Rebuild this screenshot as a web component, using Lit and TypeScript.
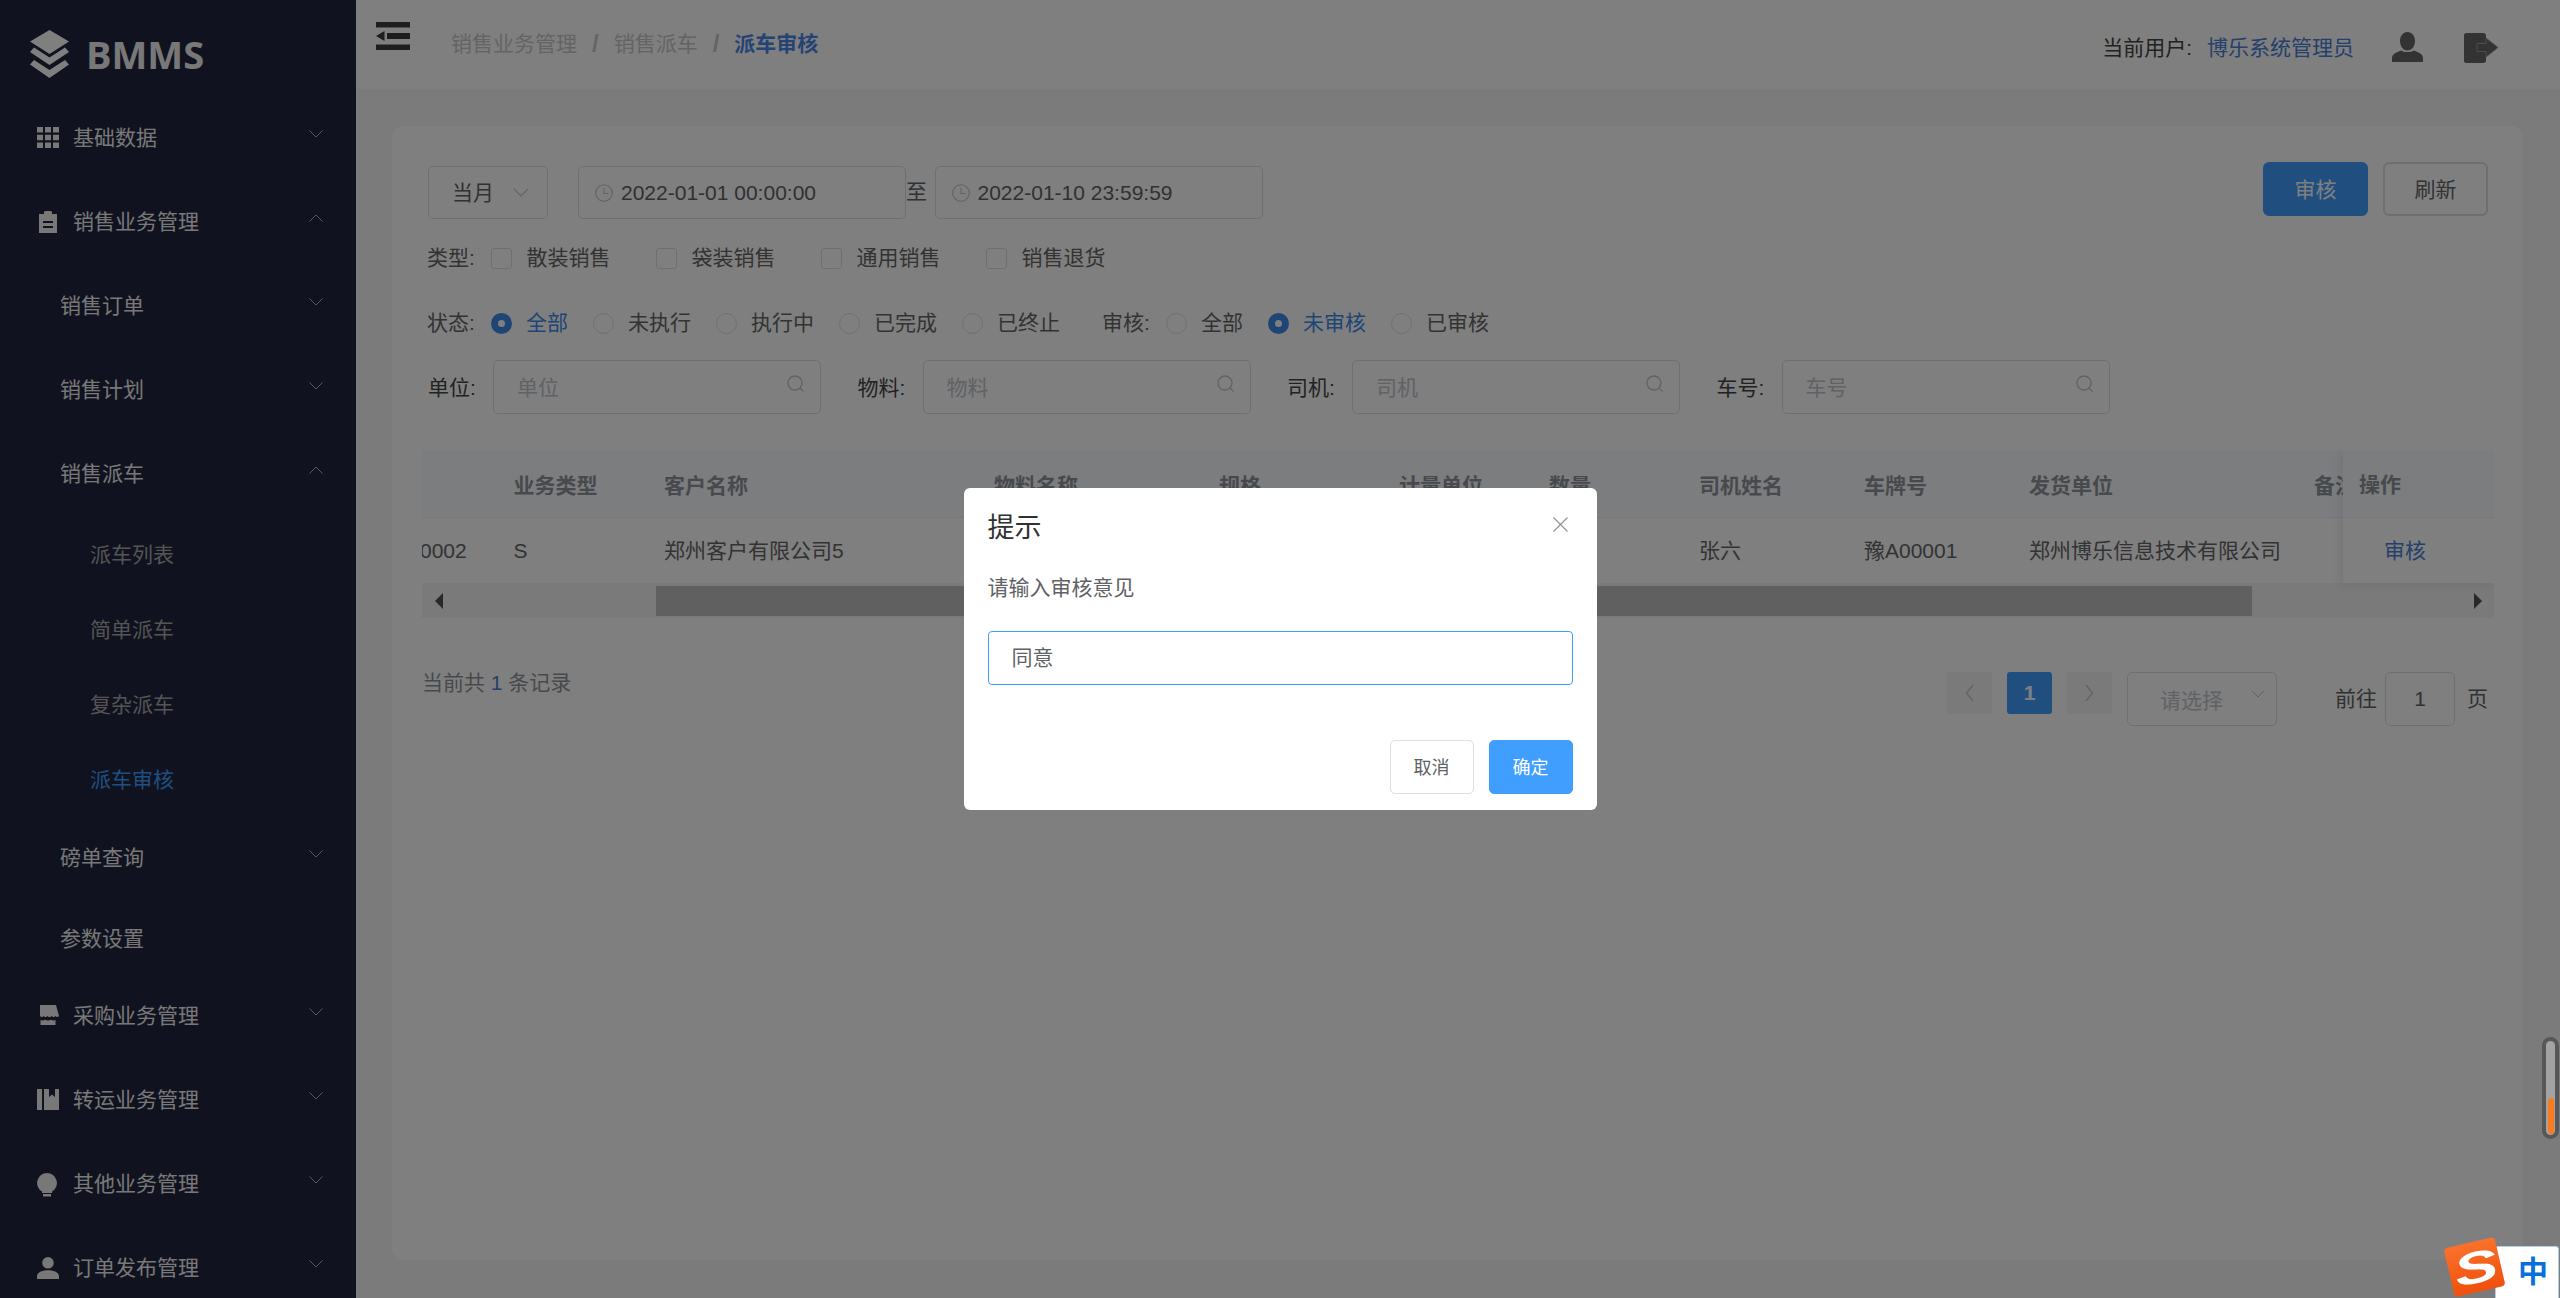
import { LitElement, html, svg, css } from "lit";
import { customElement } from "lit/decorators.js";

const icons: Record<string, any> = {
  grid: svg`<path d="M0 0h6v5.500H0zM8 0h6v5.500H8zM16 0h6v5.500h-6zM0 7.700h6v5.600H0zM8 7.700h6v5.600H8zM16 7.700h6v5.600h-6zM0 15.500h6V21H0zM8 15.500h6V21H8zM16 15.500h6V21h-6z"/>`,
  clip: svg`<path fill-rule="evenodd" d="M2 3h5V1.500C7 .6 7.600 0 8.500 0h5c.9 0 1.500.6 1.500 1.500V3h5v19H2zM6 10v2h10v-2zM6 15v2h10v-2z"/>`,
  shop: svg`<path d="M3 0h16l3 11c-1.500 1.500-3 1-3.500 0-1 1.500-3 1.500-3.700 0-1 1.500-3.400 1.500-4.300 0-1 1.500-3 1.500-3.800 0-.8 1.500-2.500 1.500-3.700 0zM3.500 15c1.500.8 3.500.5 4.500-.3 1.500 1 4.500 1 6 0 1 .8 3 1.100 4.500.3V20H3.500z"/>`,
  book: svg`<path d="M0 0h5v21H0zM7 0h5v8l3-2.500 3 2.500V0h4v21H7z"/>`,
  bulb: svg`<path d="M10 0a10 10 0 0 1 5 18.600V20H5v-1.400A10 10 0 0 1 10 0zM6 21h8v2.500H6z"/>`,
  user: svg`<path d="M11 0a5.800 5.800 0 1 1 0 11.600A5.800 5.800 0 0 1 11 0zM0 22v-3c0-3.600 5-5.800 11-5.800s11 2.200 11 5.800v3z"/>`,
};

type Item = { t: string; lv: number; icon?: string; ch?: "up" | "down"; on?: boolean };
const menu: Item[] = [
  { t: "基础数据", lv: 1, icon: "grid", ch: "down" },
  { t: "销售业务管理", lv: 1, icon: "clip", ch: "up" },
  { t: "销售订单", lv: 2, ch: "down" },
  { t: "销售计划", lv: 2, ch: "down" },
  { t: "销售派车", lv: 2, ch: "up" },
  { t: "派车列表", lv: 3 },
  { t: "简单派车", lv: 3 },
  { t: "复杂派车", lv: 3 },
  { t: "派车审核", lv: 3, on: true },
  { t: "磅单查询", lv: 2, ch: "down" },
  { t: "参数设置", lv: 2 },
  { t: "采购业务管理", lv: 1, icon: "shop", ch: "down" },
  { t: "转运业务管理", lv: 1, icon: "book", ch: "down" },
  { t: "其他业务管理", lv: 1, icon: "bulb", ch: "down" },
  { t: "订单发布管理", lv: 1, icon: "user", ch: "down" },
];

const heads = ["", "业务类型", "客户名称", "物料名称", "规格", "计量单位", "数量", "司机姓名", "车牌号", "发货单位", "备注"];
const cells = ["0002", "S", "郑州客户有限公司5", "", "", "", "", "张六", "豫A00001", "郑州博乐信息技术有限公司", ""];

const chevron = (up = false) => html`<svg class="chev" viewBox="0 0 14 8">
  <path d=${up ? "M.5 7.500 7 1l6.500 6.500" : "M.5.5 7 7l6.500-6.500"} fill="none" stroke="currentColor" stroke-width="1" />
</svg>`;
const searchIcon = html`<svg class="search" viewBox="0 0 18 18">
  <circle cx="8" cy="8" r="7" fill="none" stroke="currentColor" stroke-width="1.300" />
  <path d="M13 13l3.500 3.500" stroke="currentColor" stroke-width="1.300" />
</svg>`;
const clock = html`<svg class="clock" viewBox="0 0 18 18">
  <circle cx="9" cy="9" r="8.300" fill="none" stroke="currentColor" stroke-width="1.100" />
  <path d="M9 4v5.500h4.500" fill="none" stroke="currentColor" stroke-width="1.100" />
</svg>`;

@customElement("app-root")
export class AppRoot extends LitElement {
  static styles = css`
    :host {
      display: block;
      width: 2560px;
      height: 1298px;
      overflow: hidden;
      position: relative;
      font-family: "Liberation Sans", "Noto Sans CJK SC", sans-serif;
      font-size: 21px;
      color: #606266;
    }
    * {
      box-sizing: border-box;
    }
    .page {
      display: flex;
      height: 100%;
    }
    .side {
      width: 356px;
      flex: none;
      height: 100%;
      overflow: hidden;
      background: #20243e;
      color: #f0f0f0;
    }
    .logo {
      height: 95px;
      padding: 30px 0 0 30px;
      display: flex;
      color: #fff;
    }
    .logo svg {
      width: 39px;
      height: 48px;
      fill: currentColor;
    }
    .logo b {
      margin: 1px 0 0 17px;
      font-family: "Open Sans", sans-serif;
      font-size: 38px;
      line-height: 46px;
      color: #f0f0f0;
    }
    .mi {
      display: flex;
      align-items: center;
      height: 84px;
      padding-right: 33px;
      padding-bottom: 3px;
      flex: none;
    }
    .mi span {
      flex: 1;
    }
    .mi.lv1 {
      padding-left: 37px;
    }
    .mi.lv2 {
      padding-left: 60px;
    }
    .mi.lv3 {
      padding-left: 90px;
      height: 75px;
      padding-top: 1px;
      padding-bottom: 0;
      color: #a8a8a8;
    }
    .mi.leaf {
      height: 74.500px;
      padding-top: 1px;
      padding-bottom: 0;
    }
    .mi.on {
      color: #3f9eff;
    }
    .mi svg.mico {
      width: 22px;
      height: 24px;
      margin: 6px 14px 0 0;
      fill: currentColor;
      flex: none;
    }
    .chev {
      width: 14px;
      height: 8px;
      flex: none;
    }
    .mi .chev {
      margin-bottom: 4px;
      color: #e0e0e0;
      opacity: 0.75;
    }
    .main {
      flex: 1;
      background: #f6f6f6;
      min-width: 0;
    }
    .top {
      height: 89px;
      background: #fff;
      display: flex;
      position: relative;
    }
    .ham {
      width: 34px;
      height: 28px;
      margin: 22px 0 0 20px;
      fill: #3c3c3c;
      flex: none;
    }
    .crumbs {
      margin: 33px 0 0 41px;
      color: #c8c8c8;
      line-height: 22px;
      display: flex;
    }
    .crumbs i {
      font-style: normal;
      font-weight: 700;
      font-size: 24px;
      margin: 0 15px;
      color: #c8c8c8;
    }
    .crumbs b {
      color: #4a86e8;
    }
    .who {
      margin: 37px 0 0 auto;
      line-height: 22px;
      color: #444;
      display: flex;
    }
    .who em {
      font-style: normal;
      color: #4a80d8;
      margin-left: 15px;
    }
    .u1 {
      width: 31px;
      height: 30px;
      margin: 32px 0 0 38px;
      fill: #666;
      flex: none;
    }
    .u2 {
      width: 34px;
      height: 30px;
      margin: 33px 62px 0 41px;
      flex: none;
    }
    .card {
      margin: 37px 37px 0 36px;
      height: 1134px;
      background: #fff;
      border-radius: 12px;
      padding: 36px 29px 0 30px;
    }
    .r1 {
      display: flex;
      height: 57px;
      padding: 4px 6px 0;
      align-items: flex-start;
    }
    .box {
      border: 1px solid #dcdfe6;
      border-radius: 5px;
      height: 53px;
      display: flex;
      align-items: center;
      flex: none;
    }
    .sel {
      width: 120px;
      padding: 0 18px 3px 23px;
      margin-right: 30px;
      justify-content: space-between;
    }
    .sel .chev {
      color: #c0c4cc;
      width: 16px;
      height: 9px;
      margin-top: 3px;
    }
    .date {
      width: 328px;
      padding-left: 16px;
    }
    .clock {
      width: 18px;
      height: 18px;
      color: #c0c4cc;
      margin-right: 8px;
      flex: none;
    }
    .to {
      width: 28.500px;
      line-height: 52px;
      flex: none;
    }
    .btn {
      width: 105px;
      height: 54px;
      border-radius: 6px;
      border: 2px solid #dcdfe6;
      background: #fff;
      display: flex;
      align-items: center;
      justify-content: center;
      flex: none;
      color: #666;
      margin-top: -4px;
      padding-bottom: 2px;
    }
    .btn.pri {
      background: #409eff;
      border-color: #409eff;
      color: #fff;
      margin-left: auto;
      margin-right: 15px;
    }
    .r2,
    .r3 {
      display: flex;
      align-items: center;
      height: 42px;
      padding: 0 0 4px 5px;
      color: #666;
    }
    .r2 {
      margin-top: 18px;
    }
    .r3 {
      margin-top: 23px;
    }
    .lab {
      width: 64px;
      flex: none;
    }
    .ck {
      display: flex;
      align-items: center;
      margin-right: 45.500px;
    }
    .ck u {
      width: 21px;
      height: 21px;
      border: 1px solid #dcdfe6;
      border-radius: 3px;
      margin: 4px 14.500px 0 0;
      flex: none;
    }
    .ra {
      display: flex;
      align-items: center;
      margin-right: 25px;
    }
    .ra u {
      width: 21px;
      height: 21px;
      border: 1px solid #dcdfe6;
      border-radius: 50%;
      margin: 4px 14px 0 0;
      flex: none;
    }
    .ra.on {
      color: #3f8ae8;
    }
    .ra.on u {
      border: 7px solid #3f8ae8;
      background: #fff;
    }
    .gap {
      margin-left: 17px;
    }
    .r4 {
      display: flex;
      align-items: center;
      margin-top: 16px;
      height: 54px;
      padding-left: 6px;
      color: #444;
    }
    .fld {
      display: flex;
      align-items: center;
      margin-right: 36.500px;
    }
    .fld label {
      width: 65px;
      padding-bottom: 3px;
    }
    .inp {
      width: 328px;
      height: 54px;
      border: 1px solid #dcdfe6;
      border-radius: 5px;
      padding: 0 15px 3px 23px;
      display: flex;
      align-items: center;
      justify-content: space-between;
      color: #c0c4cc;
    }
    .search {
      width: 18px;
      height: 18px;
      color: #c0c4cc;
      margin-bottom: 3px;
    }
    .table {
      margin-top: 36px;
      height: 168px;
      position: relative;
      overflow: hidden;
    }
    .clip {
      overflow: hidden;
    }
    .tr {
      display: grid;
      grid-template-columns: 93.500px 150.500px 330px 225px 180px 150px 150px 165px 165px 285px 200px;
      margin-left: -2px;
      align-items: center;
      white-space: nowrap;
    }
    .tr.h {
      height: 68px;
      background: #f6faff;
      border-bottom: 1px solid #ebeef5;
      font-weight: 700;
      color: #909399;
    }
    .tr.b {
      height: 65px;
      padding-bottom: 3px;
      color: #666;
    }
    .tr.b .lat {
      padding-top: 3px;
    }
    .fixed {
      position: absolute;
      top: 0;
      right: 0;
      width: 151px;
      height: 133px;
      background: #fff;
      box-shadow: -3px 2px 10px rgba(0, 0, 0, 0.08);
    }
    .fixed div:first-child {
      height: 68px;
      line-height: 70px;
      padding-left: 16px;
      background: #f6faff;
      border-bottom: 1px solid #ebeef5;
      font-weight: 700;
      color: #909399;
    }
    .fixed div:last-child {
      height: 65px;
      line-height: 65px;
      padding-left: 41px;
      color: #4a80d8;
    }
    .hbar {
      display: flex;
      align-items: center;
      height: 35px;
      background: #f4f4f4;
    }
    .hbar div:first-child {
      width: 234px;
      padding-left: 13px;
    }
    .thumb {
      width: 1596px;
      height: 30px;
      background: #c1c1c1;
    }
    .hbar div:last-child {
      flex: 1;
      display: flex;
      justify-content: flex-end;
      padding-right: 12px;
    }
    .tl,
    .trg {
      display: block;
      width: 0;
      height: 0;
      border-top: 8px solid transparent;
      border-bottom: 8px solid transparent;
    }
    .tl {
      border-right: 8px solid #505050;
    }
    .trg {
      border-left: 8px solid #505050;
    }
    .foot {
      margin-top: 54px;
      display: flex;
      justify-content: space-between;
      padding-right: 6px;
    }
    .foot > span {
      line-height: 22px;
      color: #909399;
    }
    .foot > span em {
      font-style: normal;
      color: #4a80d8;
    }
    .pg {
      display: flex;
      align-items: flex-start;
    }
    .pb {
      width: 45px;
      height: 42px;
      margin-right: 15px;
      border-radius: 3px;
      background: #f4f4f5;
      color: #c0c4cc;
      display: flex;
      align-items: center;
      justify-content: center;
      font-weight: 700;
    }
    .pb.on {
      background: #409eff;
      color: #fff;
    }
    .pb svg {
      width: 9px;
      height: 18px;
    }
    .psel {
      width: 150px;
      height: 54px;
      border: 1px solid #dcdfe6;
      border-radius: 5px;
      display: flex;
      align-items: center;
      justify-content: space-between;
      padding: 0 11px 0 32px;
      color: #c0c4cc;
      margin-right: 58px;
    }
    .psel .chev {
      margin-bottom: 10px;
    }
    .pt {
      line-height: 54px;
      color: #606266;
    }
    .pi {
      width: 70px;
      height: 54px;
      border: 1px solid #dcdfe6;
      border-radius: 5px;
      margin: 0 12px 0 8px;
      display: flex;
      align-items: center;
      justify-content: center;
      color: #606266;
    }
    .mask {
      position: absolute;
      inset: 0;
      background: rgba(0, 0, 0, 0.5);
      display: flex;
      align-items: center;
      justify-content: center;
    }
    .dlg {
      width: 633px;
      height: 322px;
      background: #fff;
      border-radius: 6px;
      padding: 24px 24px 0;
    }
    .dh {
      display: flex;
      justify-content: space-between;
      align-items: center;
      height: 30px;
      padding-bottom: 3px;
      font-size: 27px;
      color: #303133;
    }
    .dh svg {
      width: 15px;
      height: 15px;
      margin: -2px 5px 0 0;
    }
    .msg {
      margin-top: 35px;
      line-height: 22px;
    }
    .di {
      margin-top: 32px;
      height: 54px;
      border: 1px solid #409eff;
      border-radius: 4px;
      padding: 0 0 5px 23px;
      display: flex;
      align-items: center;
    }
    .df {
      margin-top: 55px;
      display: flex;
      justify-content: flex-end;
    }
    .db {
      width: 84px;
      height: 54px;
      border: 1px solid #dcdfe6;
      border-radius: 5px;
      font-size: 18px;
      padding-bottom: 2px;
      display: flex;
      align-items: center;
      justify-content: center;
    }
    .db.ok {
      background: #409eff;
      border-color: #409eff;
      color: #fff;
      margin-left: 15px;
    }
    .pill {
      position: absolute;
      left: 2542px;
      top: 1037px;
      width: 17px;
      height: 102px;
      border-radius: 9px;
      background: #575757;
      padding: 4px;
      display: flex;
    }
    .pill div {
      flex: 1;
      border-radius: 5px;
      background: #a3a3a3;
      display: flex;
      align-items: flex-end;
      justify-content: center;
      padding-bottom: 1px;
    }
    .pill i {
      width: 6px;
      height: 36px;
      border-radius: 3px;
      background: #f97a1f;
    }
    .ime {
      position: absolute;
      left: 2443px;
      top: 1237px;
      width: 117px;
      height: 61px;
    }
    .ime .zh {
      position: absolute;
      left: 52px;
      top: 9px;
      width: 64px;
      height: 55px;
      background: #fff;
      border: 1px solid #b5cde0;
      border-radius: 3px;
      color: #0a6fdc;
      font-size: 30px;
      font-weight: 700;
      line-height: 50px;
      text-align: right;
      padding-right: 10px;
    }
    .ime svg {
      position: absolute;
      left: 0;
      top: 0;
      width: 66px;
      height: 61px;
    }
  `;

  menuItem(m: Item) {
    const cls = `mi lv${m.lv}${m.on ? " on" : ""}${m.t === "参数设置" ? " leaf" : ""}`;
    return html`<div class=${cls}>
      ${m.icon ? html`<svg class="mico" viewBox="0 0 22 24">${icons[m.icon]}</svg>` : ""}
      <span>${m.t}</span>
      ${m.ch ? chevron(m.ch === "up") : ""}
    </div>`;
  }

  render() {
    return html`
      <div class="page">
        <aside class="side">
          <div class="logo">
            <svg viewBox="0 0 39 48">
              <path d="M19.500 0 39 11.500 19.500 24 0 11.500z" />
              <path d="M4 17.500 19.500 27.500 35 17.500l4 4.500-19.500 13L0 22z" />
              <path d="M4 30 19.500 40 35 30l4 4.500L19.500 48 0 34.500z" />
            </svg>
            <b>BMMS</b>
          </div>
          ${menu.map((m) => this.menuItem(m))}
        </aside>
        <div class="main">
          <header class="top">
            <svg class="ham" viewBox="0 0 34 28">
              <path d="M0 0h34v5.500H0zM11 11h23v6H11zM0 14l8.500-5v10zM0 22.500h34V28H0z" />
            </svg>
            <div class="crumbs">
              销售业务管理<i>/</i>销售派车<i>/</i><b>派车审核</b>
            </div>
            <div class="who">当前用户:<em>博乐系统管理员</em></div>
            <svg class="u1" viewBox="0 0 31 30">
              <path d="M15.500 0c4.500 0 7.500 4 7.500 9s-3 9.500-7.500 9.500S8 14 8 9s3-9 7.500-9zM0 30v-4c0-4 5-6 9.500-7.500 2 2 10 2 12 0C26 20 31 22 31 26v4z" />
            </svg>
            <svg class="u2" viewBox="0 0 34 30">
              <path fill="#666" d="M2 0h17c2 0 3 1 3 3v24c0 2-1 3-3 3H2c-1 0-2-1-2-2V2C0 1 1 0 2 0z" />
              <path fill="#666" stroke="#9a9a9a" stroke-width="1" d="M13 10.500h9V5l12 9.500L22 24v-5.500h-9z" />
            </svg>
          </header>
          <section class="card">
            <div class="r1">
              <div class="box sel">当月${chevron()}</div>
              <div class="box date">${clock}2022-01-01 00:00:00</div>
              <div class="to">至</div>
              <div class="box date">${clock}2022-01-10 23:59:59</div>
              <div class="btn pri">审核</div>
              <div class="btn">刷新</div>
            </div>
            <div class="r2">
              <span class="lab">类型:</span>
              ${["散装销售", "袋装销售", "通用销售", "销售退货"].map((t) => html`<div class="ck"><u></u>${t}</div>`)}
            </div>
            <div class="r3">
              <span class="lab">状态:</span>
              <div class="ra on"><u></u>全部</div>
              ${["未执行", "执行中", "已完成", "已终止"].map((t) => html`<div class="ra"><u></u>${t}</div>`)}
              <span class="lab gap">审核:</span>
              <div class="ra"><u></u>全部</div>
              <div class="ra on"><u></u>未审核</div>
              <div class="ra"><u></u>已审核</div>
            </div>
            <div class="r4">
              ${["单位", "物料", "司机", "车号"].map(
                (t) => html`<div class="fld">
                  <label>${t}:</label>
                  <div class="inp">${t}${searchIcon}</div>
                </div>`
              )}
            </div>
            <div class="table">
              <div class="clip">
                <div class="tr h">${heads.map((t) => html`<div>${t}</div>`)}</div>
                <div class="tr b">
                  ${cells.map((t) => html`<div class=${/^[0-9A-Z]+$/.test(t) ? "lat" : ""}>${t}</div>`)}
                </div>
              </div>
              <div class="fixed">
                <div>操作</div>
                <div>审核</div>
              </div>
              <div class="hbar">
                <div><span class="tl"></span></div>
                <span class="thumb"></span>
                <div><span class="trg"></span></div>
              </div>
            </div>
            <div class="foot">
              <span>当前共 <em>1</em> 条记录</span>
              <div class="pg">
                <div class="pb">
                  <svg viewBox="0 0 9 18"><path d="M8 1 1.500 9 8 17" fill="none" stroke="currentColor" stroke-width="1.300" /></svg>
                </div>
                <div class="pb on">1</div>
                <div class="pb">
                  <svg viewBox="0 0 9 18"><path d="M1 1l6.500 8L1 17" fill="none" stroke="currentColor" stroke-width="1.300" /></svg>
                </div>
                <div class="psel">请选择${chevron()}</div>
                <span class="pt">前往</span>
                <div class="pi">1</div>
                <span class="pt">页</span>
              </div>
            </div>
          </section>
        </div>
      </div>
      <div class="mask">
        <div class="dlg">
          <div class="dh">
            提示
            <svg viewBox="0 0 15 15"><path d="M.5.5l14 14M14.500.5l-14 14" stroke="#909399" stroke-width="1.200" /></svg>
          </div>
          <div class="msg">请输入审核意见</div>
          <div class="di">同意</div>
          <div class="df">
            <div class="db">取消</div>
            <div class="db ok">确定</div>
          </div>
        </div>
      </div>
      <div class="pill"><div><i></i></div></div>
      <div class="ime">
        <div class="zh">中</div>
        <svg viewBox="0 0 66 61">
          <defs>
            <linearGradient id="sg" x1="0" y1="0" x2="0" y2="1">
              <stop offset="0" stop-color="#f9722c" />
              <stop offset="1" stop-color="#f04f0c" />
            </linearGradient>
          </defs>
          <g transform="rotate(-13 32 32)">
            <rect x="6" y="5" width="52" height="50" rx="4" fill="url(#sg)" />
            <text x="33" y="46" text-anchor="middle" font-family="Liberation Sans" font-size="44" font-weight="700" font-style="italic" fill="#fff" transform="translate(-16.500 0) scale(1.500 1)">S</text>
          </g>
        </svg>
      </div>
    `;
  }
}
